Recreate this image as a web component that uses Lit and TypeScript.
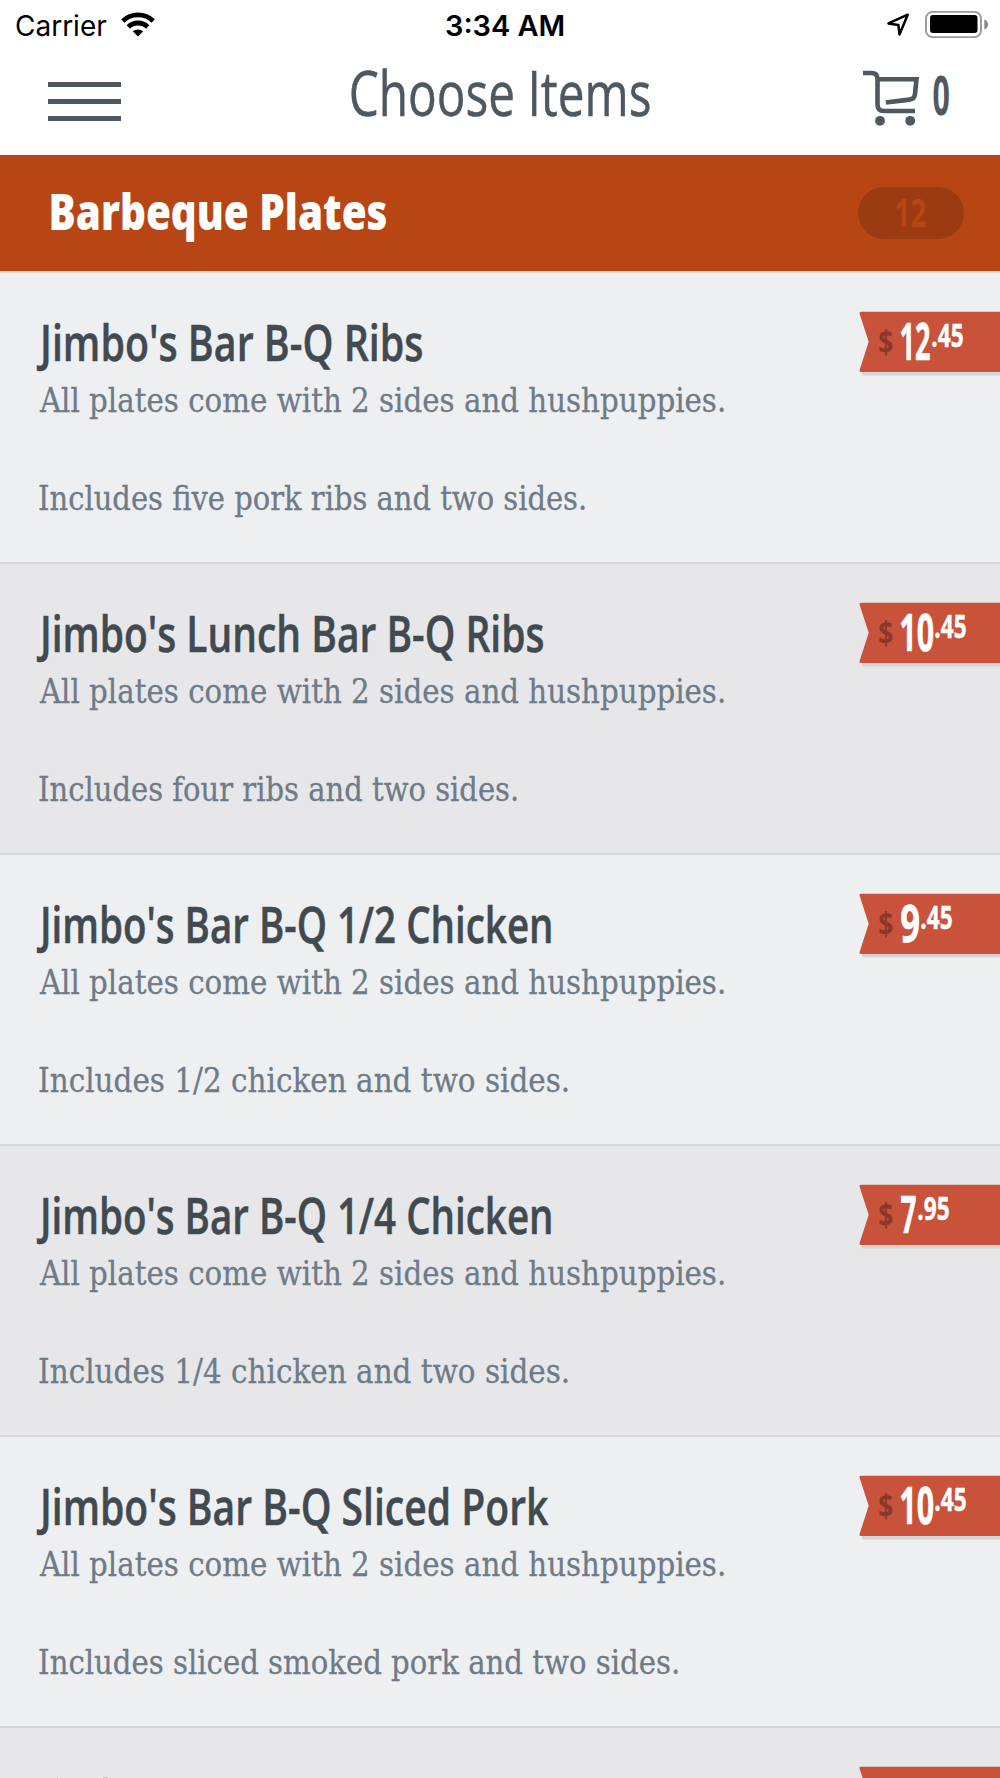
import { LitElement, html, css, svg } from "lit";
import { customElement, property, query } from "lit/decorators.js";

/** One line of text whose glyphs are stretched or narrowed to an exact visible width. */
@customElement("fit-text")
class FitText extends LitElement {
  @property() text = "";
  @property({ type: Number }) width = 100;
  @query(".line") line!: HTMLElement;

  static styles = css`
    :host { display: block; white-space: pre; }
    .line { display: block; width: max-content; transform-origin: 0 0; }
  `;

  updated() {
    const s = getComputedStyle(this.line);
    const ctx = document.createElement("canvas").getContext("2d")!;
    ctx.font = `${s.fontWeight} ${s.fontSize} ${s.fontFamily}`;
    const m = ctx.measureText(this.text);
    const k = this.width / (m.actualBoundingBoxLeft + m.actualBoundingBoxRight);
    this.line.style.transform = `translateX(${m.actualBoundingBoxLeft * k}px) scaleX(${k})`;
    this.style.width = `${this.width}px`;
  }

  render() {
    return html`<span class="line">${this.text}</span>`;
  }
}

@customElement("price-tag")
class PriceTag extends LitElement {
  @property() whole = "";
  @property() cents = "";
  @property({ type: Number }) wholeWidth = 29;
  @property({ type: Number }) centsWidth = 31;

  static styles = css`
    :host { display: block; width: 141px; height: 64px; position: relative; font-family: "Open Sans", sans-serif; font-weight: 700; }
    .shape { position: absolute; left: 0; top: 0; display: block; }
    .price { position: relative; display: flex; align-items: flex-start; padding-left: 20px; color: #fff; }
    .dollar { font-size: 32px; line-height: 62px; color: #8a382b; margin-right: 8px; }
    .whole { font-size: 52px; line-height: 58px; font-weight: 700; -webkit-text-stroke: .6px #fff; }
    .cents { font-size: 33px; line-height: 47px; margin-left: 2px; font-weight: 700; -webkit-text-stroke: .5px #fff; }
  `;

  render() {
    return html`
      <svg class="shape" width="141" height="66" viewBox="0 0 141 66">
        <path d="M3 59H141V64.500H4.500Q2.500 64.500 3 62Z" fill="#d3d4d6" />
        <path d="M2 .7H141V60.900H2Q0 60.900 .6 58.900L9.700 30.800L.6 2.700Q0 .7 2 .7Z" fill="#c9523a" />
      </svg>
      ${this.whole ? html`
        <div class="price">
          <fit-text class="dollar" .text=${"$"} .width=${14}></fit-text>
          <fit-text class="whole" .text=${this.whole} .width=${this.wholeWidth}></fit-text>
          <fit-text class="cents" .text=${this.cents} .width=${this.centsWidth}></fit-text>
        </div>` : ""}`;
  }
}

interface Item {
  name: string;
  nameWidth: number;
  note: string;
  noteWidth: number;
  whole: string;
  wholeWidth: number;
  cents: string;
}

const SIDES = "All plates come with 2 sides and hushpuppies.";

const ITEMS: Item[] = [
  { name: "Jimbo's Bar B-Q Ribs", nameWidth: 385, note: "Includes five pork ribs and two sides.", noteWidth: 546, whole: "12", wholeWidth: 29, cents: ".45" },
  { name: "Jimbo's Lunch Bar B-Q Ribs", nameWidth: 506, note: "Includes four ribs and two sides.", noteWidth: 478, whole: "10", wholeWidth: 32, cents: ".45" },
  { name: "Jimbo's Bar B-Q 1/2 Chicken", nameWidth: 514, note: "Includes 1/2 chicken and two sides.", noteWidth: 529, whole: "9", wholeWidth: 18, cents: ".45" },
  { name: "Jimbo's Bar B-Q 1/4 Chicken", nameWidth: 514, note: "Includes 1/4 chicken and two sides.", noteWidth: 529, whole: "7", wholeWidth: 15, cents: ".95" },
  { name: "Jimbo's Bar B-Q Sliced Pork", nameWidth: 512, note: "Includes sliced smoked pork and two sides.", noteWidth: 639, whole: "10", wholeWidth: 32, cents: ".45" },
  { name: "Jimbo's", nameWidth: 138, note: "", noteWidth: 0, whole: "", wholeWidth: 0, cents: "" },
];

const wifi = svg`
  <g fill="none" stroke="#000" stroke-width="4.800">
    <path d="M1.800 8.900A22 22 0 0 1 32.200 8.900" />
    <path d="M7.300 14.900A14 14 0 0 1 26.700 14.900" />
  </g>
  <path d="M11.800 19.300A8 8 0 0 1 22.200 19.300L17 24.500Z" />`;

@customElement("app-root")
class AppRoot extends LitElement {
  static styles = css`
    :host { display: block; width: 1000px; height: 1778px; overflow: hidden; background: #fff; font-family: "Open Sans", sans-serif; }
    svg { display: block; }
    .top { height: 155px; box-sizing: border-box; display: flex; flex-direction: column; }
    .status { height: 50px; display: grid; grid-template-columns: 446px 1fr auto; font-family: Inter, sans-serif; font-size: 28.500px; line-height: 51px; color: #000; }
    .carrier { display: flex; padding-left: 16px; gap: 14px; }
    .wifi { margin-top: 12px; }
    .time { font-weight: 600; }
    .indicators { display: flex; padding: 11px 11px 0 0; gap: 16px; }
    .arrow { margin-top: 2px; }
    .nav { display: grid; grid-template-columns: 351px 1fr auto; height: 105px; color: #4e5861; }
    .menu { display: flex; flex-direction: column; gap: 12px; padding: 32px 0 0 48px; }
    .bar { width: 73px; height: 5px; background: #4e5861; }
    .heading { font-size: 63px; line-height: 84px; -webkit-text-stroke: .5px #4e5861; }
    .cart { display: flex; gap: 14px; padding: 20px 51px 0 0; }
    .count { font-size: 53px; line-height: 50px; font-weight: 700; }
    .section { height: 116px; display: flex; align-items: center; justify-content: space-between; box-sizing: border-box; padding: 0 36px 0 51px; background: #b84615; border-top: 1px solid #a64318; }
    .category { font-size: 50px; line-height: 60px; font-weight: 800; color: #fff; padding-bottom: 5px; }
    .pill { width: 106px; height: 52px; border-radius: 26px; background: #9b3b12; color: #b84615; display: flex; justify-content: center; margin-bottom: 1px; }
    .total { font-size: 39px; line-height: 50px; font-weight: 700; }
    .row { height: 291px; box-sizing: border-box; border-top: 2px solid #d6d7d9; background: #eeeff1; display: flex; justify-content: space-between; padding: 38px 0 0 39px; }
    .row.alt { background: #e7e7e9; }
    .name { font-size: 51px; line-height: 60px; font-weight: 600; color: #414a51; margin: 0 0 5px -2px; -webkit-text-stroke: .5px #414a51; }
    .desc { font-family: "DejaVu Serif", serif; font-size: 33px; line-height: 49px; color: #6e7b88; -webkit-text-stroke: .3px #6e7b88; }
    .note { margin-top: 49px; }
  `;

  render() {
    return html`
      <header class="top">
        <div class="status">
          <div class="carrier">
            <fit-text .text=${"Carrier"} .width=${91}></fit-text>
            <svg class="wifi" width="34" height="25" viewBox="0 0 34 25">${wifi}</svg>
          </div>
          <fit-text class="time" .text=${"3:34 AM"} .width=${118}></fit-text>
          <div class="indicators">
            <svg class="arrow" width="22" height="24" viewBox="0 0 22 24">
              <path d="M20.700 1.700L1.500 10.400L11.400 12L12.500 21.500Z" fill="none" stroke="#000" stroke-width="2.500" stroke-linejoin="round" />
            </svg>
            <svg width="64" height="28" viewBox="0 0 64 28">
              <rect x="1" y=".9" width="55" height="25.200" rx="6.500" fill="none" stroke="#999" stroke-width="1.900" />
              <rect x="5" y="4" width="47.500" height="18" rx="3" />
              <path d="M59.300 8.500Q63 10 63 13.400T59.300 18.500Z" fill="#888" />
            </svg>
          </div>
        </div>
        <nav class="nav">
          <div class="menu"><div class="bar"></div><div class="bar"></div><div class="bar"></div></div>
          <fit-text class="heading" .text=${"Choose Items"} .width=${299}></fit-text>
          <div class="cart">
            <svg width="56" height="57" viewBox="0 0 56 57">
              <g fill="none" stroke="#4e5861" stroke-width="4.600">
                <path d="M0 3H8.500Q14.500 3 14.500 9V34.500Q14.500 41 21 41H52" />
                <path d="M14.500 9.200H53.500L52 24Q51.500 29 46.500 29.600L22.800 32.500" />
              </g>
              <circle cx="17" cy="50.800" r="4.900" fill="#4e5861" />
              <circle cx="47.200" cy="50.800" r="4.900" fill="#4e5861" />
            </svg>
            <fit-text class="count" .text=${"0"} .width=${16}></fit-text>
          </div>
        </nav>
      </header>
      <div class="section">
        <fit-text class="category" .text=${"Barbeque Plates"} .width=${335}></fit-text>
        <div class="pill"><fit-text class="total" .text=${"12"} .width=${30}></fit-text></div>
      </div>
      ${ITEMS.map((item, i) => html`
        <article class="row ${i % 2 ? "alt" : ""}">
          <div>
            <fit-text class="name" .text=${item.name} .width=${item.nameWidth}></fit-text>
            ${item.note ? html`
              <fit-text class="desc" .text=${SIDES} .width=${685}></fit-text>
              <fit-text class="desc note" .text=${item.note} .width=${item.noteWidth}></fit-text>` : ""}
          </div>
          <price-tag .whole=${item.whole} .wholeWidth=${item.wholeWidth} .cents=${item.cents}></price-tag>
        </article>`)}
    `;
  }
}
